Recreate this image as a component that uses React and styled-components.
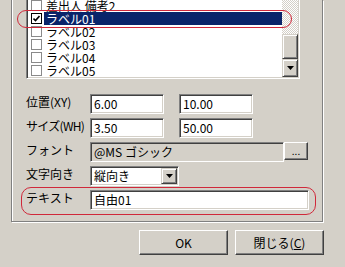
import React from "react";
import styled, { createGlobalStyle, css } from "styled-components";

const GlobalStyle = createGlobalStyle`
  html, body {
    margin: 0;
    padding: 0;
    background: #d4d0c8;
  }
  body {
    width: 345px;
    height: 267px;
    overflow: hidden;
    font-family: "Noto Sans CJK JP", "Liberation Sans", sans-serif;
    font-size: 12px;
    color: #000;
  }
`;

// classic 3D edges
const sunken = css`
  border-style: solid;
  border-width: 1px;
  border-color: #808080 #fff #fff #808080;
  box-shadow: inset 1px 1px 0 #404040, inset -1px -1px 0 #d4d0c8;
`;

const raised = css`
  background: #d4d0c8;
  border-style: solid;
  border-width: 1px;
  border-color: #fff #404040 #404040 #fff;
  box-shadow: inset -1px -1px 0 #808080;
`;

const Page = styled.div`
  position: relative;
  width: 345px;
  height: 267px;
`;

const GroupBox = styled.div`
  box-sizing: border-box;
  margin-left: 11px;
  width: 312px;
  height: 222px;
  border: 1px solid #808080;
  border-top: none;
  box-shadow: inset 1px 0 0 #fff, 1px 1px 0 #fff;
  padding-left: 14px;
`;

const ListBox = styled.div`
  box-sizing: border-box;
  display: flex;
  width: 274px;
  height: 79px;
  background: #fff;
  border-left: 1px solid #808080;
  border-right: 1px solid #fff;
  border-bottom: 1px solid #fff;
  padding: 0 1px 1px 1px;
  box-shadow: inset 1px 0 0 #404040, inset -1px -1px 0 #d4d0c8;
`;

const ListRows = styled.div`
  flex: 1;
  overflow: hidden;
  display: flex;
  flex-direction: column;
`;

const RowsInner = styled.div`
  margin-top: -1px;
`;

const ListRow = styled.div`
  display: flex;
  align-items: center;
  height: 13px;
`;

const Check = styled.span`
  box-sizing: border-box;
  width: 11px;
  height: 11px;
  margin-left: 3px;
  border: 1px solid ${({ $checked }) => ($checked ? "#000" : "#8a8a8a")};
  background: #fff;
  display: flex;
  align-items: center;
  justify-content: center;
`;

const RowText = styled.span`
  flex: 1;
  margin-left: 2px;
  padding-left: 2px;
  line-height: 13px;
  height: 13px;
  white-space: nowrap;
  background: ${({ $selected }) => ($selected ? "#0a246a" : "transparent")};
  color: ${({ $selected }) => ($selected ? "#fff" : "#000")};
`;

const ScrollBar = styled.div`
  width: 16px;
  display: flex;
  flex-direction: column;
`;

const Track = styled.div`
  flex: 1;
  background: repeating-conic-gradient(#fff 0 25%, #d4d0c8 0 50%) 0 0 / 2px 2px;
`;

const Thumb = styled.div`
  box-sizing: border-box;
  height: 25px;
  ${raised}
  border-color: #d4d0c8 #404040 #404040 #d4d0c8;
  box-shadow: inset 1px 1px 0 #fff, inset -1px -1px 0 #808080;
`;

const ArrowButton = styled.div`
  box-sizing: border-box;
  height: ${({ $h }) => $h || 18}px;
  width: ${({ $w }) => ($w ? `${$w}px` : "auto")};
  ${raised}
  border-color: #d4d0c8 #404040 #404040 #d4d0c8;
  box-shadow: inset 1px 1px 0 #fff, inset -1px -1px 0 #808080;
  display: flex;
  align-items: center;
  justify-content: center;
`;

const Form = styled.div`
  padding-top: 15px;
  display: flex;
  flex-direction: column;
  gap: 4px;
`;

const FieldRow = styled.div`
  display: flex;
  align-items: flex-start;
  height: 20px;
`;

const Label = styled.div`
  width: 64px;
  line-height: 16px;
  white-space: nowrap;
  letter-spacing: ${({ $tight }) => ($tight ? "-0.7px" : "0")};
`;

const TextBox = styled.div`
  box-sizing: border-box;
  ${sunken}
  width: ${({ $w }) => $w}px;
  height: ${({ $h }) => $h || 20}px;
  margin-left: ${({ $gap }) => $gap || 0}px;
  padding-left: 3px;
  line-height: 18px;
  background: ${({ $disabled }) => ($disabled ? "#d4d0c8" : "#fff")};
  white-space: nowrap;
`;

const EllipsisButton = styled.div`
  box-sizing: border-box;
  width: 24px;
  height: 18px;
  ${raised}
  display: flex;
  align-items: center;
  justify-content: center;
  font-size: 10px;
  line-height: 10px;
  padding-bottom: 1px;
`;

const Combo = styled.div`
  box-sizing: border-box;
  ${sunken}
  width: 89px;
  height: 20px;
  background: #fff;
  display: flex;
  align-items: center;
  padding: 1px;
`;

const ComboText = styled.span`
  flex: 1;
  padding-left: 2px;
  line-height: 16px;
`;

const ButtonBar = styled.div`
  display: flex;
  justify-content: flex-end;
  gap: 7px;
  width: 324px;
  margin-top: 8px;
`;

const PushButton = styled.div`
  box-sizing: border-box;
  width: 89px;
  height: 25px;
  ${raised}
  box-shadow: inset -1px -1px 0 #808080;
  display: flex;
  align-items: center;
  justify-content: center;
  line-height: 14px;
`;

const Mark = styled.div`
  position: absolute;
  box-sizing: border-box;
  left: ${({ $x }) => $x}px;
  top: ${({ $y }) => $y}px;
  width: ${({ $w }) => $w}px;
  height: ${({ $h }) => $h}px;
  border: 1.5px solid #d0283a;
  border-radius: 10px;
  pointer-events: none;
`;

const DownArrow = () => (
  <svg width="7" height="4" viewBox="0 0 7 4">
    <path d="M0 0h7L3.5 4z" fill="#000" />
  </svg>
);

const CheckMark = () => (
  <svg width="7" height="7" viewBox="0 0 7 7">
    <path d="M0.5 3.5l2 2 4-4.5" fill="none" stroke="#000" strokeWidth="1.6" />
  </svg>
);

const items = [
  { id: 0, text: "差出人 備考2" },
  { id: 1, text: "ラベル01", checked: true, selected: true },
  { id: 2, text: "ラベル02" },
  { id: 3, text: "ラベル03" },
  { id: 4, text: "ラベル04" },
  { id: 5, text: "ラベル05" },
];

const App = () => (
  <Page>
    <GlobalStyle />
    <GroupBox>
      <ListBox>
        <ListRows>
          <RowsInner>
            {items.map((item) => (
              <ListRow key={item.id}>
                <Check $checked={item.checked}>{item.checked && <CheckMark />}</Check>
                <RowText $selected={item.selected}>{item.text}</RowText>
              </ListRow>
            ))}
          </RowsInner>
        </ListRows>
        <ScrollBar>
          <Track />
          <Thumb />
          <ArrowButton>
            <DownArrow />
          </ArrowButton>
        </ScrollBar>
      </ListBox>

      <Form>
        <FieldRow>
          <Label>位置(XY)</Label>
          <TextBox $w={74}>6.00</TextBox>
          <TextBox $w={74} $gap={15}>10.00</TextBox>
        </FieldRow>
        <FieldRow>
          <Label $tight>サイズ(WH)</Label>
          <TextBox $w={74}>3.50</TextBox>
          <TextBox $w={74} $gap={15}>50.00</TextBox>
        </FieldRow>
        <FieldRow>
          <Label>フォント</Label>
          <TextBox $w={194} $disabled>@MS ゴシック</TextBox>
          <EllipsisButton>...</EllipsisButton>
        </FieldRow>
        <FieldRow>
          <Label>文字向き</Label>
          <Combo>
            <ComboText>縦向き</ComboText>
            <ArrowButton $w={16} $h={16}>
              <DownArrow />
            </ArrowButton>
          </Combo>
        </FieldRow>
        <FieldRow>
          <Label>テキスト</Label>
          <TextBox $w={219}>自由01</TextBox>
        </FieldRow>
      </Form>
    </GroupBox>

    <ButtonBar>
      <PushButton>OK</PushButton>
      <PushButton>
        閉じる(<u>C</u>)
      </PushButton>
    </ButtonBar>

    <Mark $x={17} $y={10} $w={275} $h={18} />
    <Mark $x={21} $y={187} $w={295} $h={28} />
  </Page>
);

export default App;
